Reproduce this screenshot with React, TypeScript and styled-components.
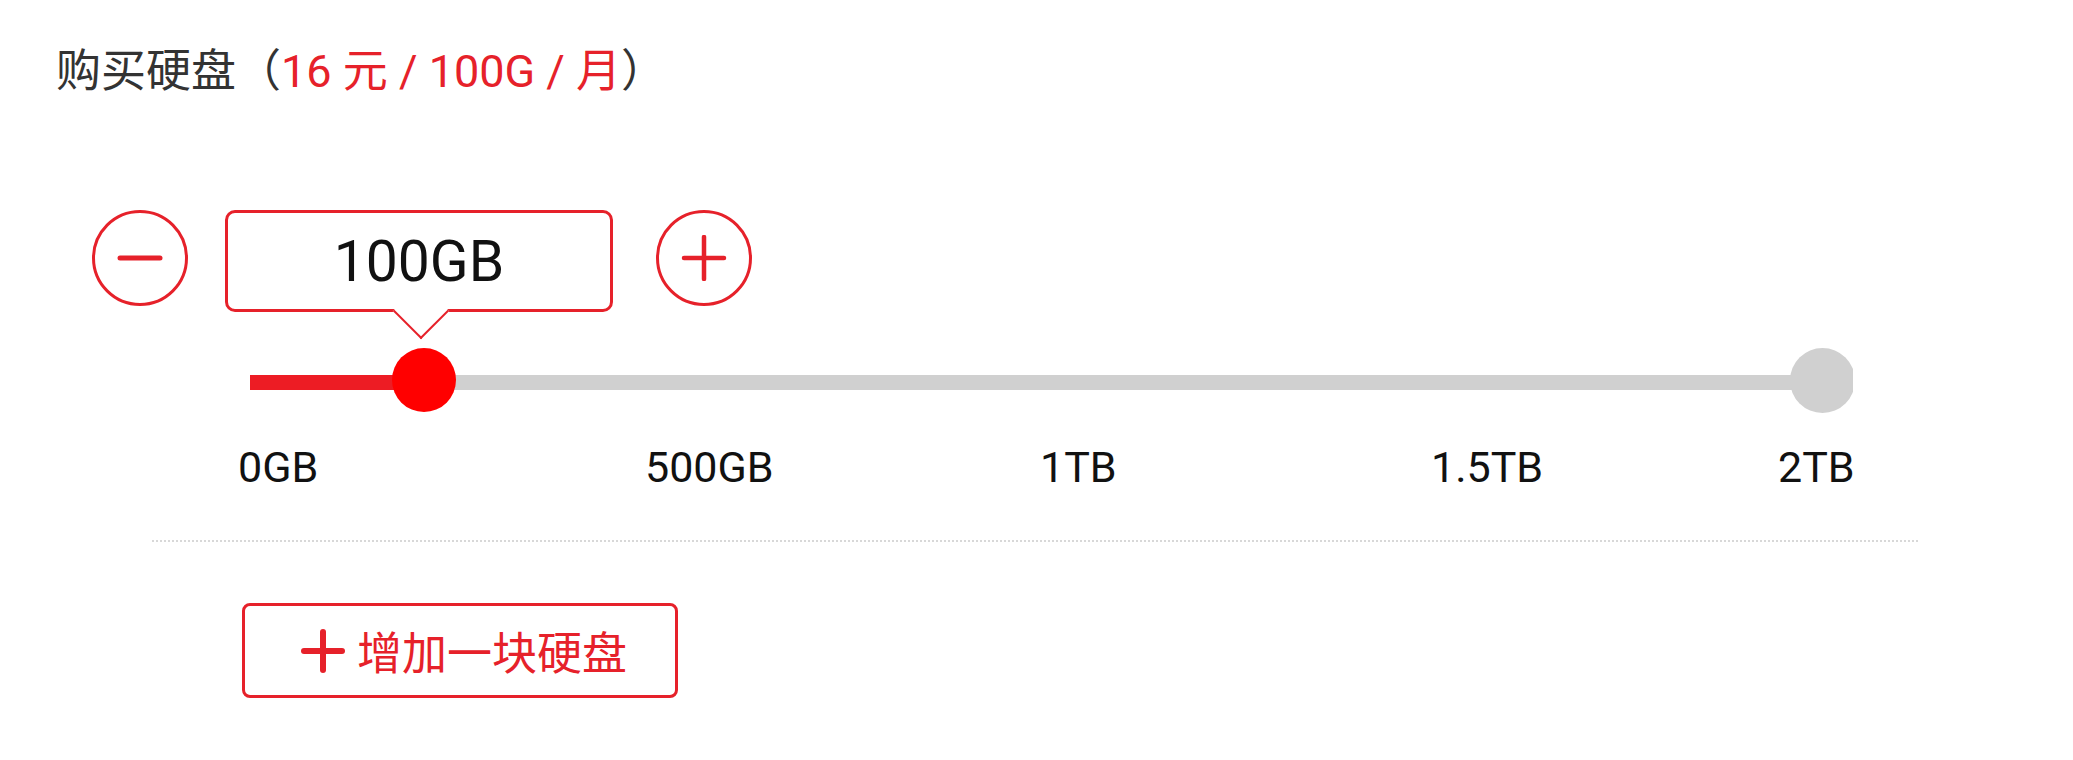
import React from "react";
import styled, { createGlobalStyle } from "styled-components";

const RED = "#e6212a";
const FONT = `Roboto, "Noto Sans CJK SC", sans-serif`;

const GlobalStyle = createGlobalStyle`
  html, body {
    margin: 0;
    padding: 0;
    background: #ffffff;
  }
  body {
    font-family: ${FONT};
  }
`;

const ticks = [
  { label: "0GB", width: 407 },
  { label: "500GB", width: 395 },
  { label: "1TB", width: 391 },
  { label: "1.5TB", width: 347 },
  { label: "2TB", width: 0 },
];

const App: React.FC = () => {
  const fillWidth = 174;
  const thumbSize = 64;

  return (
    <Page>
      <GlobalStyle />
      <Title>
        购买硬盘（<Price>16 元 / 100G / 月</Price>）
      </Title>

      {/* stepper + value bubble */}
      <StepperRow>
        <RoundButton aria-label="minus">
          <svg width="46" height="46" viewBox="0 0 46 46">
            <line x1="3" y1="23" x2="43" y2="23" stroke={RED} strokeWidth="5" strokeLinecap="round" />
          </svg>
        </RoundButton>
        <Bubble>100GB</Bubble>
        <RoundButton aria-label="plus" $plus>
          <svg width="46" height="46" viewBox="0 0 46 46">
            <line x1="3" y1="23" x2="43" y2="23" stroke={RED} strokeWidth="4.5" strokeLinecap="round" />
            <line x1="23" y1="2" x2="23" y2="44" stroke={RED} strokeWidth="4.5" strokeLinecap="round" />
          </svg>
        </RoundButton>
      </StepperRow>

      {/* slider */}
      <Slider>
        <Rail>
          <Fill style={{ width: fillWidth }} />
        </Rail>
        <EndCap />
        <Thumb style={{ left: fillWidth - thumbSize / 2 }} />
      </Slider>

      <ScaleRow>
        {ticks.map((t) => (
          <Tick key={t.label}>{t.label}</Tick>
        ))}
      </ScaleRow>

      <Divider />

      <AddButton>
        <svg width="44" height="44" viewBox="0 0 44 44">
          <line x1="3" y1="22" x2="41" y2="22" stroke={RED} strokeWidth="6" strokeLinecap="round" />
          <line x1="22" y1="3" x2="22" y2="41" stroke={RED} strokeWidth="6" strokeLinecap="round" />
        </svg>
        增加一块硬盘
      </AddButton>
    </Page>
  );
};

const Page = styled.div`
  width: 2073px;
  height: 760px;
  padding-top: 42px;
  box-sizing: border-box;
  overflow: hidden;
`;

const Title = styled.h1`
  margin: 0;
  padding-left: 56px;
  font-family: ${FONT};
  font-weight: 400;
  font-size: 45px;
  line-height: 60px;
  color: #333333;
  white-space: nowrap;
`;

const Price = styled.span`
  color: ${RED};
`;

const StepperRow = styled.div`
  display: flex;
  align-items: flex-start;
  margin-top: 108px;
  margin-left: 92px;
`;

const RoundButton = styled.div<{ $plus?: boolean }>`
  width: 96px;
  height: 96px;
  box-sizing: border-box;
  border: 3px solid ${RED};
  border-radius: 50%;
  display: flex;
  align-items: center;
  justify-content: center;
  margin-left: ${(p) => (p.$plus ? "43px" : "0")};
  margin-right: ${(p) => (p.$plus ? "0" : "37px")};
`;

const Bubble = styled.div`
  position: relative;
  width: 388px;
  height: 102px;
  box-sizing: border-box;
  border: 3px solid ${RED};
  border-radius: 10px;
  background: #ffffff;
  display: flex;
  align-items: center;
  justify-content: center;
  font-family: ${FONT};
  font-size: 57px;
  color: #111111;

  &::after {
    content: "";
    position: absolute;
    left: 50%;
    bottom: -22px;
    width: 40px;
    height: 40px;
    margin-left: -18px;
    box-sizing: border-box;
    background: #ffffff;
    border-right: 2px solid ${RED};
    border-bottom: 2px solid ${RED};
    transform: rotate(45deg);
  }
`;

const Slider = styled.div`
  position: relative;
  display: flex;
  align-items: flex-start;
  margin-top: 36px;
  margin-left: 250px;
  width: 1603px;
  height: 65px;
  overflow: hidden;
`;

const Rail = styled.div`
  display: flex;
  width: 100%;
  height: 15px;
  margin-top: 27px;
  background: #d0d0d0;
`;

const Fill = styled.div`
  height: 100%;
  background: #ed1c24;
`;

const Thumb = styled.div`
  position: absolute;
  top: 0;
  width: 64px;
  height: 64px;
  border-radius: 50%;
  background: #ff0000;
`;

const EndCap = styled.div`
  position: absolute;
  top: 0;
  right: -2px;
  width: 65px;
  height: 65px;
  border-radius: 50%;
  background: #d0d0d0;
`;

const ScaleRow = styled.div`
  display: grid;
  grid-template-columns: ${ticks
    .slice(0, -1)
    .map((t) => `${t.width}px`)
    .join(" ")} auto;
  margin-top: 33px;
  margin-left: 238px;
  width: 1616px;
`;

const Tick = styled.div`
  font-family: ${FONT};
  font-size: 43px;
  line-height: 43px;
  color: #111111;
  white-space: nowrap;
`;

const Divider = styled.div`
  margin-top: 51px;
  margin-left: 152px;
  width: 1766px;
  border-top: 2px dotted #d8d8d8;
`;

const AddButton = styled.div`
  display: flex;
  align-items: center;
  justify-content: center;
  gap: 12px;
  margin-top: 61px;
  margin-left: 242px;
  width: 436px;
  height: 95px;
  box-sizing: border-box;
  border: 3px solid ${RED};
  border-radius: 8px;
  font-family: ${FONT};
  font-size: 45px;
  color: ${RED};
  padding-left: 8px;
`;

export default App;
